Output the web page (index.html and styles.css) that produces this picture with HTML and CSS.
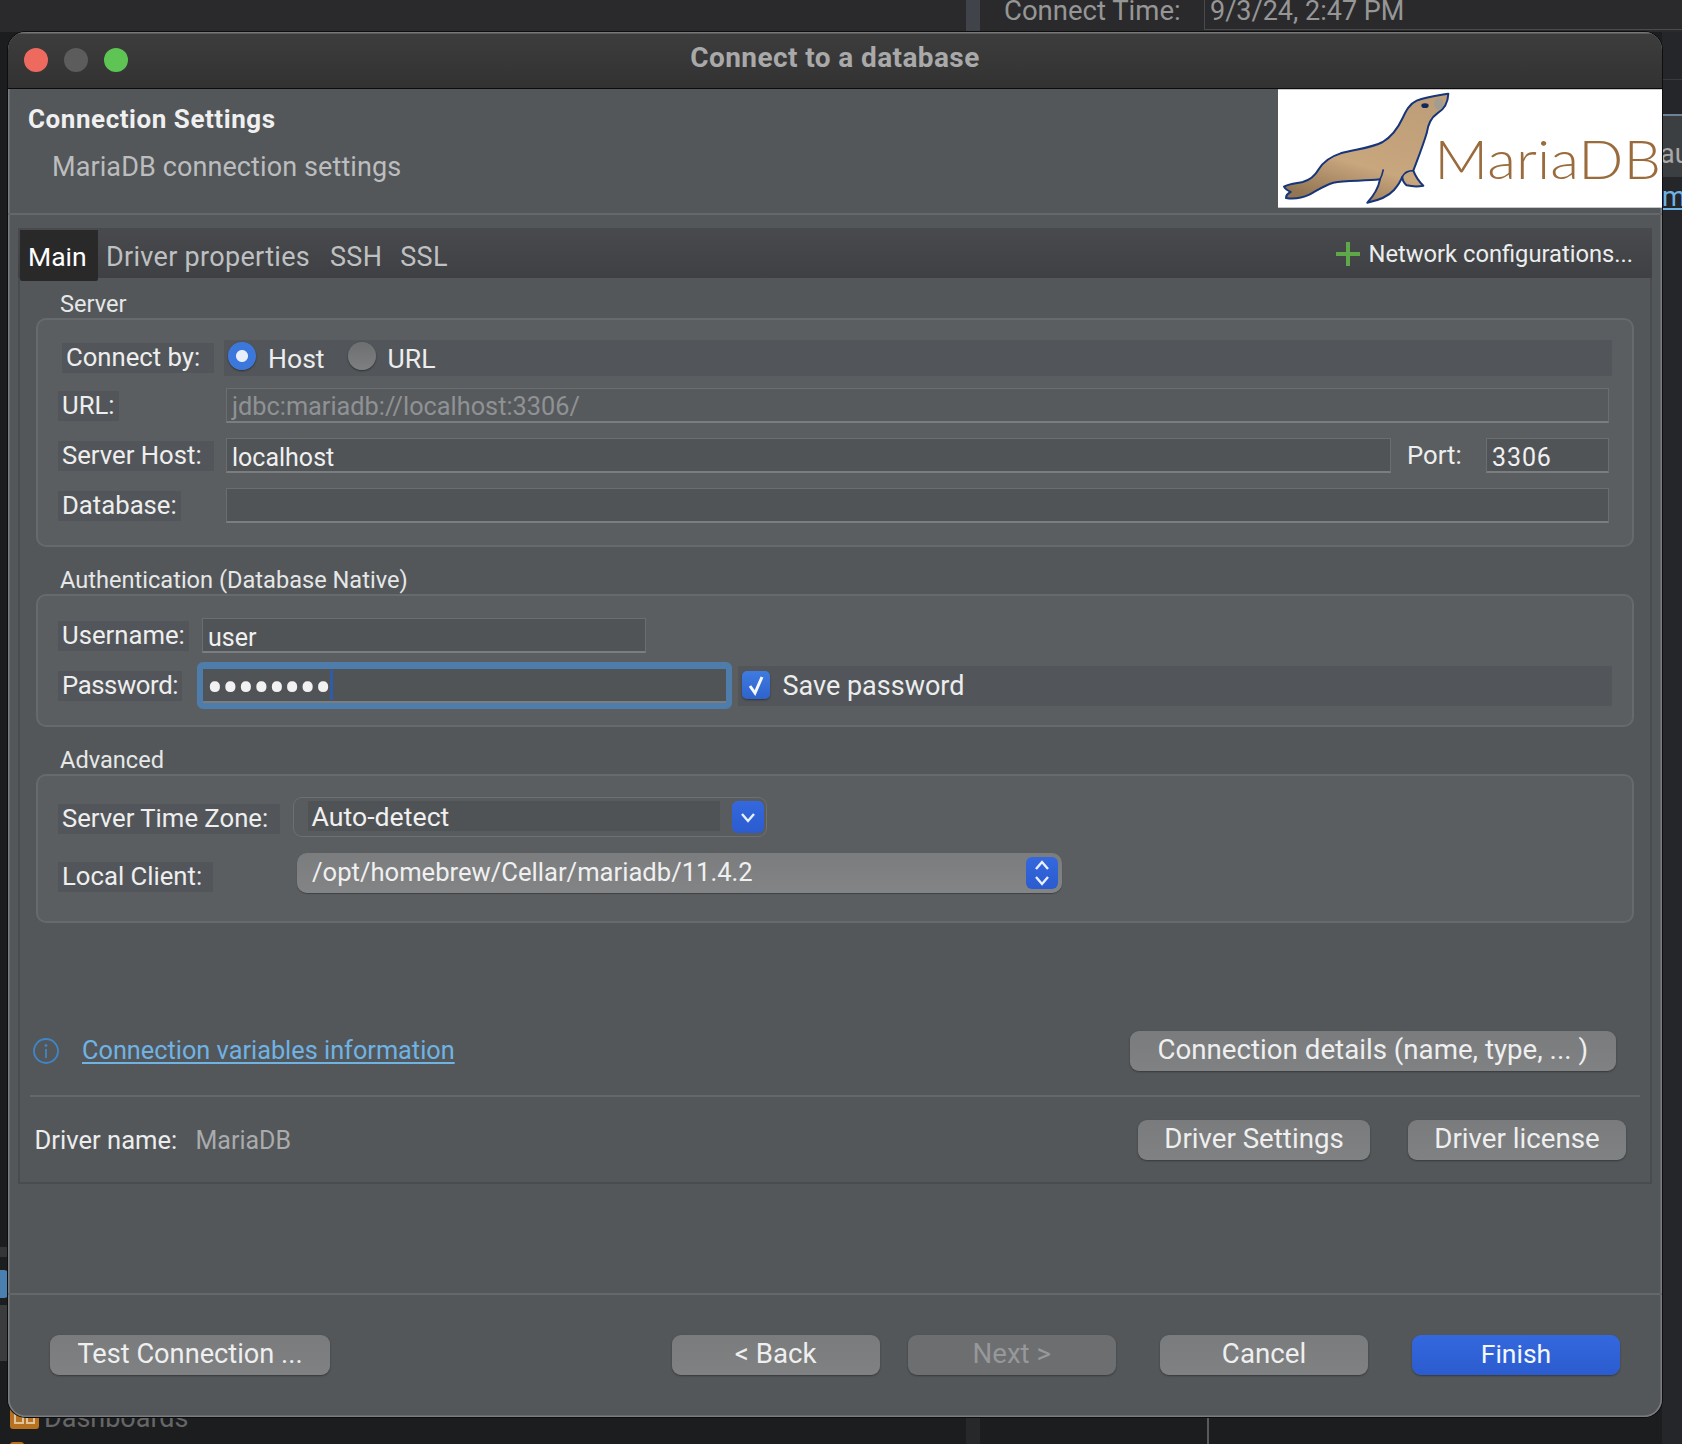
FILE: index.html
```html
<!DOCTYPE html>
<html lang="en">
<head>
<meta charset="utf-8">
<title>Connect to a database</title>
<link rel="stylesheet" href="styles.css">
</head>
<body>
<div class="desk">
  <div class="desk-top">
    <div class="desk-strip"></div>
    <div class="desk-label">Connect Time:</div>
    <div class="desk-date">9/3/24, 2:47 PM</div>
  </div>
  <div class="desk-right">
    <div class="dr-a"></div>
    <div class="dr-b"></div>
    <div class="dr-c">au</div>
    <div class="dr-d">m</div>
  </div>
  <div class="desk-left">
    <div class="dl-a"></div>
    <div class="dl-b"></div>
    <div class="dl-c"></div>
  </div>
  <div class="desk-bottom">
    <div class="db-icons">
      <div class="db-icon"><span></span><span></span></div>
      <div class="db-icon2"></div>
    </div>
    <div class="db-text">Dashboards</div>
    <div class="db-strip"></div>
    <div class="db-line"></div>
  </div>
</div>

<main class="window">
  <header class="titlebar">
    <div class="lights">
      <span class="light red"></span>
      <span class="light grey"></span>
      <span class="light green"></span>
    </div>
    <div class="title">Connect to a database</div>
  </header>

  <section class="head">
    <div class="head-text">
      <div class="head-title">Connection Settings</div>
      <div class="head-sub">MariaDB connection settings</div>
    </div>
    <svg class="logo" viewBox="24 28 1152 355" aria-label="MariaDB">
      <defs>
        <linearGradient id="seal" x1="0.75" y1="0" x2="0.3" y2="1">
          <stop offset="0" stop-color="#bd9e78"/>
          <stop offset="0.65" stop-color="#c8a67e"/>
          <stop offset="1" stop-color="#927653"/>
        </linearGradient>
      </defs>
      <rect x="24" y="28" width="1152" height="355" fill="#fff"/>
      <path d="M535 41 C505 46 470 50 440 62 C418 72 408 92 398 114 C385 142 368 168 338 186 C305 204 255 208 212 220 C180 230 160 245 146 268 C136 286 122 300 98 306 C78 310 58 310 42 320 C46 328 54 332 62 336 C54 340 48 346 48 354 C72 358 96 354 118 344 C140 332 162 316 190 308 C228 300 282 304 330 298 C326 320 312 346 292 368 C322 362 352 352 372 330 C384 316 392 304 397 290 C396 298 402 310 410 316 C428 320 446 320 460 317 C446 304 436 288 430 272 C442 240 458 200 470 160 C474 132 484 112 502 100 C522 88 534 66 535 41 Z" fill="url(#seal)" stroke="#17357a" stroke-width="6" stroke-linejoin="round"/>
      <path d="M397 290 C402 280 412 272 430 272" fill="none" stroke="#17357a" stroke-width="5"/>
      <path d="M330 298 C336 288 338 278 340 268" fill="none" stroke="#17357a" stroke-width="5"/>
      <ellipse cx="465" cy="77" rx="11" ry="7" fill="#14265a"/>
      <ellipse cx="506" cy="72" rx="14" ry="17" fill="#a39c90"/>
      <text class="logo-text" x="493" y="297" textLength="680" lengthAdjust="spacingAndGlyphs">MariaDB</text>
    </svg>
  </section>

  <section class="panel">
    <nav class="tabs">
      <div class="tab active">Main</div>
      <div class="tab tab-driver">Driver properties</div>
      <div class="tab tab-ssh">SSH</div>
      <div class="tab tab-ssl">SSL</div>
      <div class="net">
        <svg class="plus" viewBox="0 0 24 24"><path d="M12 0V24M0 12H24"/></svg>
        <span>Network configurations...</span>
      </div>
    </nav>

    <div class="legend legend-first">Server</div>
    <div class="box box-server">
      <div class="row row-connect">
        <div class="col col-server"><span class="lbl lbl-connect">Connect by:</span></div>
        <div class="radio-bar">
          <span class="radio on"></span><span class="radio-text">Host</span>
          <span class="radio off"></span><span class="radio-text">URL</span>
        </div>
      </div>
      <div class="row row-url">
        <div class="col col-server"><span class="lbl">URL:</span></div>
        <div class="input input-url">jdbc:mariadb://localhost:3306/</div>
      </div>
      <div class="row row-field">
        <div class="col col-server"><span class="lbl lbl-host">Server Host:</span></div>
        <div class="input input-host">localhost</div>
        <span class="port-lbl">Port:</span>
        <div class="input input-port">3306</div>
      </div>
      <div class="row row-field">
        <div class="col col-server"><span class="lbl">Database:</span></div>
        <div class="input input-grow"></div>
      </div>
    </div>

    <div class="legend">Authentication (Database Native)</div>
    <div class="box box-auth">
      <div class="row row-user">
        <div class="col col-user"><span class="lbl">Username:</span></div>
        <div class="input input-user">user</div>
      </div>
      <div class="row row-pass">
        <div class="col col-pass"><span class="lbl lbl-pass">Password:</span></div>
        <div class="focus">
          <div class="pass-inner"><span class="dots">••••••••</span><span class="caret"></span></div>
        </div>
        <div class="save-bar">
          <span class="check">
            <svg viewBox="0 0 28 28"><path d="M8 15 L13 22 L20 6"/></svg>
          </span>
          <span class="save-text">Save password</span>
        </div>
      </div>
    </div>

    <div class="legend">Advanced</div>
    <div class="box box-adv">
      <div class="row row-tz">
        <span class="lbl lbl-tz">Server Time Zone:</span>
        <div class="combo">
          <div class="combo-text">Auto-detect</div>
          <span class="blue-btn combo-btn">
            <svg viewBox="0 0 32 32"><path d="M10 13 L16 20 L22 13"/></svg>
          </span>
        </div>
      </div>
      <div class="row row-client">
        <span class="lbl lbl-client">Local Client:</span>
        <div class="select">
          <span class="select-text">/opt/homebrew/Cellar/mariadb/11.4.2</span>
          <span class="blue-btn stepper">
            <svg viewBox="0 0 32 32"><path d="M10 12 L16 5 L22 12M10 20 L16 27 L22 20"/></svg>
          </span>
        </div>
      </div>
    </div>

    <div class="info-row">
      <svg class="info" viewBox="0 0 26 26">
        <circle cx="13" cy="13" r="12"/>
        <path d="M13 11V20"/>
        <circle class="info-dot" cx="13" cy="7.5" r="1.4"/>
      </svg>
      <a class="link">Connection variables information</a>
      <button class="btn btn-details">Connection details (name, type, ... )</button>
    </div>
    <div class="panel-sep"></div>
    <div class="driver-row">
      <span class="driver-lbl">Driver name:</span>
      <span class="driver-val">MariaDB</span>
      <button class="btn btn-settings">Driver Settings</button>
      <button class="btn btn-license">Driver license</button>
    </div>
  </section>

  <div class="window-sep"></div>
  <footer class="footer">
    <button class="btn btn-test">Test Connection ...</button>
    <button class="btn btn-back">&lt; Back</button>
    <button class="btn btn-next">Next &gt;</button>
    <button class="btn btn-cancel">Cancel</button>
    <button class="btn btn-finish">Finish</button>
  </footer>
</main>
</body>
</html>
```
FILE: styles.css
```css
* { box-sizing: border-box; }
html, body { margin: 0; padding: 0; height: 1444px; overflow: hidden; }
body {
  width: 1682px;
  position: relative;
  background: #1c1d1f;
  font-family: Roboto, "Liberation Sans", sans-serif;
  font-size: 25px;
  color: #eceded;
}

/* backdrop: the application behind the dialog */
.desk { position: absolute; inset: 0; overflow: hidden; }
.desk-top {
  height: 32px;
  background: #2a2a2c;
  display: flex;
  color: #969696;
  font-size: 27px;
  line-height: 22px;
}
.desk-strip { width: 14px; height: 32px; margin-left: 966px; background: #40444a; }
.desk-label { margin-left: 24px; width: 200px; font-size: 27.5px; white-space: nowrap; }
.desk-date {
  height: 30px;
  flex: 1;
  padding-left: 5px;
  border-left: 1px solid #4a4a4c;
  border-bottom: 1px solid #4a4a4c;
}
.desk-right { position: absolute; left: 1662px; top: 32px; width: 20px; height: 1412px; background: #24262a; overflow: hidden; }
.dr-a { height: 48px; border-bottom: 1px solid #3a3b3d; }
.dr-b { height: 36px; border-bottom: 2px solid #6f8197; }
.dr-c { height: 61px; background: #3c3f42; color: #a8a8a8; font-size: 27px; line-height: 76px; text-indent: -2px; overflow: hidden; }
.dr-d { height: 32px; color: #6fb3e4; font-size: 27px; line-height: 40px; text-decoration: underline; }
.desk-left { position: absolute; left: 0; top: 1247px; width: 8px; }
.dl-a { height: 10px; background: #343537; }
.dl-b { height: 28px; margin-top: 13px; background: #4a7fb0; border-radius: 0 4px 4px 0; }
.dl-c { height: 56px; margin-top: 7px; background: #3a3c3e; }
.desk-bottom { position: absolute; left: 0; top: 1400px; width: 1682px; height: 44px; display: flex; overflow: hidden; }
.db-icons { width: 29px; margin-left: 10px; flex: none; }
.db-icon { height: 29px; padding: 7px 4px 0; display: flex; gap: 2px; background: #b8711f; border-radius: 3px; }
.db-icon span { flex: 1; height: 17px; border: 2px solid #dcc4a0; }
.db-icon2 { width: 14px; height: 3px; margin-top: 13px; background: #b8711f; border-radius: 3px 3px 0 0; }
.db-text { width: 144px; margin-left: 5px; color: #666; font-size: 27px; line-height: 36px; flex: none; }
.db-strip { width: 14px; margin-left: 778px; background: #26282a; flex: none; }
.db-line { width: 2px; margin-left: 227px; background: #5a5a5c; flex: none; }

/* window */
.window {
  position: absolute;
  left: 8px;
  top: 32px;
  width: 1654px;
  height: 1385px;
  display: flex;
  flex-direction: column;
  background: #53575a;
  border-radius: 18px;
  box-shadow: 0 0 0 1px #0e0e0f, inset 0 0 0 1.5px #7a7d80;
  overflow: hidden;
}
.titlebar {
  height: 57px;
  flex: none;
  display: flex;
  align-items: center;
  position: relative;
  background: linear-gradient(#3d3d3e, #323233);
  border-bottom: 1.5px solid #0c0c0c;
  box-shadow: inset 0 1.5px 0 #77787a;
}
.lights { display: flex; gap: 16px; margin-left: 16px; }
.light { width: 24px; height: 24px; border-radius: 50%; }
.red { background: #ee6a5f; }
.grey { background: #5c5c5d; }
.green { background: #5ec454; }
.title {
  position: absolute;
  left: 0;
  right: 0;
  top: 9px;
  text-align: center;
  font-weight: 700;
  font-size: 28px;
  letter-spacing: 0.4px;
  color: #a9a9a9;
}

.head {
  height: 126px;
  flex: none;
  display: flex;
  justify-content: space-between;
  border-bottom: 2px solid #64686b;
}
.head-text { padding: 15px 0 0 20px; }
.head-title { font-weight: 700; font-size: 26px; letter-spacing: 0.55px; line-height: 30px; color: #f0f0f0; }
.head-sub { margin: 17px 0 0 24px; font-size: 27px; letter-spacing: 0.1px; line-height: 32px; color: #bcbdbe; }
.logo { width: 384px; height: 119px; display: block; flex: none; }
.logo-text { font-family: Lato, sans-serif; font-weight: 300; font-size: 160px; fill: #9a6b3c; }

.panel {
  height: 956px;
  flex: none;
  margin: 13px 10px 0 10px;
  border: solid #494c4f;
  border-width: 0 2px 2px 2px;
}
.tabs {
  height: 50px;
  margin: 0 -2px;
  padding-left: 2px;
  display: flex;
  background: linear-gradient(#484a4d, #3e4043);
  color: #bfc0c1;
  font-size: 27px;
  letter-spacing: 0.3px;
}
.tab { height: 50px; line-height: 50px; padding-top: 4px; white-space: nowrap; }
.tab.active { height: 51px; margin-top: 2px; padding: 2px 0 0 8px; line-height: 50px; width: 78px; font-size: 26.5px; letter-spacing: 0; background: #29292a; color: #fff; border-radius: 0 0 2px 2px; }
.tab-driver { margin-left: 8px; }
.tab-ssh { margin-left: 20px; }
.tab-ssl { margin-left: 18px; }
.net {
  margin-left: auto;
  padding-right: 19px;
  display: flex;
  align-items: center;
  gap: 9px;
  color: #eceded;
  font-size: 23.7px;
  letter-spacing: 0;
  height: 52px;
}
.plus { width: 24px; height: 24px; }
.plus path { fill: none; stroke: #5fa84a; stroke-width: 4; }

.legend { margin: 19px 0 0 40px; height: 28px; line-height: 28px; font-size: 23.6px; color: #e6e7e7; }
.legend-first { margin-top: 12px; }
.box {
  margin: 0 16px;
  background: #5a5e60;
  border: 2px solid #666a6d;
  border-radius: 10px;
}
.box-server { height: 229px; padding: 20px 20px 0 20px; }
.box-auth { height: 133px; padding: 22px 20px 0 20px; }
.box-adv { height: 149px; padding: 21px 20px 0 20px; }

.row { display: flex; align-items: center; }
.row-connect { height: 36px; }
.row-url { height: 35px; margin-top: 12px; }
.row-field { height: 35px; margin-top: 15px; }
.col { flex: none; }
.col-server { width: 168px; }
.col-user { width: 144px; }
.col-pass { width: 138.5px; }
.lbl {
  display: inline-block;
  height: 30px;
  line-height: 28px;
  padding: 0 4px;
  background: #52565a;
  color: #eeeeee;
  font-size: 25.7px;
  vertical-align: top;
  white-space: nowrap;
}
.lbl-connect { margin-left: 4px; padding: 0 0 0 4px; width: 151.5px; }
.lbl-host { width: 155.5px; }
.lbl-pass { letter-spacing: -0.4px; }
.radio-bar {
  flex: 1;
  height: 36px;
  margin-left: -2px;
  display: flex;
  align-items: center;
  background: #52565a;
  padding-left: 4px;
  font-size: 26.6px;
}
.radio { width: 28px; height: 28px; border-radius: 50%; flex: none; margin-top: -4px; box-shadow: 0 1px 2px rgba(0,0,0,.45); }
.radio.on { background: radial-gradient(circle, #e8effa 0 5.5px, #3c78dc 6.5px); }
.radio.off { background: linear-gradient(#6d6f71, #7d7f81); margin-left: 23px; }
.radio-text { margin: 1px 0 0 12px; }

.input {
  height: 35px;
  line-height: 33px;
  padding: 2px 5px 0;
  background: #515457;
  border: 1px solid #6a6e71;
  border-bottom: 2px solid #7a7e81;
  color: #f0f0f0;
  flex: none;
}
.input-url { width: 1383px; padding-top: 1px; background: #575a5d; color: #8f9294; font-size: 25.3px; }
.input-host { width: 1165px; }
.port-lbl { margin: -1px 0 0 16px; width: 79px; flex: none; color: #eeeeee; font-size: 25.7px; }
.input-port { width: 123px; letter-spacing: 0.9px; }
.input-grow { width: 1383px; }
.row-user { height: 35px; }
.input-user { width: 443.5px; }
.row-pass { height: 47px; margin-top: 9px; }
.focus {
  width: 535.5px;
  height: 47px;
  flex: none;
  border: 6px solid #4f7dab;
  border-top-width: 7px;
  border-radius: 6px;
}
.pass-inner {
  height: 34px;
  padding-left: 4px;
  background: #515457;
  border-bottom: 2px solid #7a7e81;
  display: flex;
  align-items: center;
  overflow: hidden;
}
.dots { font-size: 50px; letter-spacing: -1.4px; line-height: 32px; margin-top: 6px; color: #f2f2f2; white-space: nowrap; }
.caret { width: 3px; height: 30px; background: #2e5ca8; margin-left: 0; flex: none; }
.save-bar {
  flex: 1;
  height: 40px;
  margin-left: 6px;
  padding-left: 3.5px;
  display: flex;
  align-items: center;
  background: #52565a;
}
.check {
  width: 28px;
  height: 28px;
  margin-top: -2px;
  background: linear-gradient(#3f7be0, #2e63cc);
  border-radius: 5px;
  flex: none;
  box-shadow: 0 1px 2px rgba(0,0,0,.4);
}
.check svg { width: 28px; height: 28px; display: block; }
.check path { fill: none; stroke: #f5f8ff; stroke-width: 3; }
.save-text { margin: 1px 0 0 13px; font-size: 27px; }

.row-tz { height: 40px; }
.lbl-tz { width: 222px; margin-top: 7px; align-self: flex-start; }
.combo {
  margin-left: 12.5px;
  width: 474.5px;
  height: 40px;
  padding: 3px 2px 0 14px;
  display: flex;
  justify-content: space-between;
  align-items: flex-start;
  background: #595c5f;
  border: 1px solid #6c7073;
  border-radius: 9px;
}
.combo-text { width: 412px; height: 30px; line-height: 32px; padding-left: 4px; background: #505356; color: #f0f0f0; font-size: 26.7px; }
.blue-btn { display: block; width: 32px; height: 32px; background: linear-gradient(#3468de, #2b5ccf); border-radius: 6px; flex: none; }
.blue-btn svg { width: 32px; height: 32px; display: block; }
.blue-btn path { fill: none; stroke: #eaf0ff; stroke-width: 2.4; }
.row-client { height: 40px; margin-top: 16px; }
.lbl-client { width: 155px; margin-top: 9px; align-self: flex-start; }
.select {
  margin-left: 83.5px;
  width: 765.5px;
  height: 40px;
  padding: 0 4px 0 15.5px;
  display: flex;
  align-items: center;
  justify-content: space-between;
  background: linear-gradient(#7a7c7e, #828485);
  border-radius: 10px;
  box-shadow: 0 1px 1px rgba(0,0,0,.3);
}
.select-text { color: #f0f0f0; margin-top: -3px; font-size: 25.6px; }

.info-row {
  height: 40px;
  margin-top: 108px;
  padding: 0 34.5px 0 13px;
  display: flex;
  align-items: center;
}
.info { width: 26px; height: 26px; flex: none; }
.info circle { fill: none; stroke: #3f86c8; stroke-width: 1.8; }
.info path { stroke: #3f86c8; stroke-width: 1.8; }
.info .info-dot { fill: #3f86c8; stroke: none; }
.link { margin: -1px 0 0 23px; color: #6fb3e4; text-decoration: underline; text-underline-offset: 3px; font-size: 25.3px; }
.panel-sep { height: 2px; margin: 24px 10px 0 10px; background: #64686b; }
.driver-row {
  height: 40px;
  margin-top: 23px;
  padding: 0 24px 0 14.5px;
  display: flex;
  align-items: center;
  font-size: 25.6px;
}
.driver-lbl { width: 161px; flex: none; white-space: nowrap; }
.driver-val { color: #a9abad; font-size: 25px; }

.btn {
  display: block;
  height: 40px;
  padding: 0 0 3px;
  border: 0;
  border-radius: 9px;
  font: inherit;
  font-size: 27.7px;
  line-height: 34px;
  white-space: nowrap;
  color: #efefef;
  text-align: center;
  background: linear-gradient(#797b7d, #7f8182);
  box-shadow: 0 1px 2px rgba(0,0,0,.35);
}
.btn-details { width: 485.5px; margin-left: auto; }
.btn-settings { width: 232px; margin-left: auto; }
.btn-license { width: 218px; margin-left: 38px; }

.window-sep { height: 2px; flex: none; margin-top: 109px; background: #64686b; }
.footer {
  padding: 40px 42px 0 42px;
  display: flex;
}
.btn-test { width: 280px; font-size: 27.2px; }
.btn-back { width: 208.5px; margin-left: 341.5px; }
.btn-next { width: 208.5px; margin-left: 27.5px; color: #96989a; background: #6c6e70; }
.btn-cancel { width: 208px; margin-left: 44px; }
.btn-finish { width: 208px; margin-left: 44px; background: linear-gradient(#3468de, #2b5ccf); color: #f4f7ff; font-size: 26.5px; }
```
